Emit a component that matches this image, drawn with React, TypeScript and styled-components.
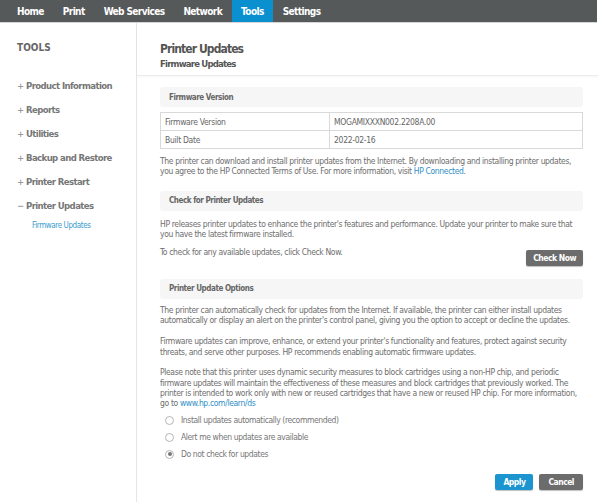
import React from 'react';
import styled, { createGlobalStyle } from 'styled-components';

const GlobalStyle = createGlobalStyle`
  html, body {
    margin: 0;
    padding: 0;
    background: #ffffff;
  }
  body {
    font-family: 'DejaVu Sans Condensed', 'Liberation Sans', sans-serif;
    color: #6b6b6b;
  }
`;

const tabs = ['Home', 'Print', 'Web Services', 'Network', 'Tools', 'Settings'];
const menu = ['Product Information', 'Reports', 'Utilities', 'Backup and Restore', 'Printer Restart'];

const Page = styled.div`
  width: 598px;
  height: 502px;
  overflow: hidden;
  display: flex;
  flex-direction: column;
`;

const NavBar = styled.nav`
  height: 22px;
  background: #555959;
  display: flex;
  align-items: stretch;
  padding-left: 7.5px;
  margin-right: 1px;
  border-bottom: 1px solid #d6d6d6;
`;

const Tab = styled.a<{ $active?: boolean }>`
  display: flex;
  align-items: center;
  padding: 0 9.5px;
  color: #ffffff;
  font-weight: bold;
  font-size: 10px;
  letter-spacing: -0.6px;
  background: ${(p) => (p.$active ? '#0a8fcf' : 'transparent')};
  text-decoration: none;
`;

const Body = styled.div`
  flex: 1;
  display: flex;
`;

const Sidebar = styled.aside`
  width: 137px;
  border-right: 1px solid #e6e6e6;
  padding: 19px 0 0 17px;
  box-sizing: border-box;
`;

const SideTitle = styled.div`
  font-weight: bold;
  font-size: 10px;
  color: #666;
  margin-bottom: 20px;
`;

const SideItem = styled.div`
  font-weight: bold;
  font-size: 9.5px;
  letter-spacing: -0.6px;
  color: #777;
  height: 24px;
  display: flex;
  align-items: center;
  gap: 2px;
`;

const Sign = styled.span`
  font-weight: normal;
  color: #888;
  width: 7px;
`;

const SubItem = styled.div`
  font-size: 8px;
  letter-spacing: -0.4px;
  color: #3a9ccf;
  padding-left: 15px;
  margin-top: 4px;
`;

const Main = styled.main`
  flex: 1;
  display: flex;
  flex-direction: column;
`;

const Header = styled.header`
  padding: 18px 0 5px 23px;
  border-bottom: 1px solid #ececec;
  box-shadow: 0 1px 2px rgba(0, 0, 0, 0.04);
`;

const Title = styled.h1`
  margin: 0;
  font-size: 12px;
  letter-spacing: -0.9px;
  color: #555;
  line-height: 16px;
`;

const Subtitle = styled.h2`
  margin: 0;
  font-size: 9.5px;
  letter-spacing: -0.8px;
  color: #555;
  line-height: 13px;
`;

const Content = styled.div`
  padding: 11px 15px 0 23px;
`;

const SectionHead = styled.div<{ $gap?: number }>`
  height: 20px;
  margin-top: ${(p) => p.$gap ?? 0}px;
  background: #f6f6f6;
  border-radius: 3px;
  display: flex;
  align-items: center;
  padding-left: 9px;
  font-weight: bold;
  font-size: 8px;
  letter-spacing: -0.45px;
  color: #666;
`;

const Table = styled.table`
  width: 100%;
  border-collapse: collapse;
  margin-top: 5px;
  font-size: 8.5px;
  letter-spacing: -0.3px;
  color: #666;

  td {
    border: 1px solid #d9d9d9;
    height: 17px;
    padding: 0 4px;
  }
  td:first-child {
    width: 160px;
  }
`;

const Para = styled.p<{ $gap?: number }>`
  margin: ${(p) => p.$gap ?? 7}px 0 0;
  font-size: 8.5px;
  letter-spacing: -0.36px;
  line-height: 10.4px;
  color: #6e6e6e;
`;

const Link = styled.a`
  color: #2f8fc6;
  text-decoration: none;
`;

const CheckRow = styled.div`
  display: flex;
  justify-content: space-between;
  align-items: flex-start;
  margin-top: 4px;
  margin-bottom: 13px;
`;

const Button = styled.button<{ $primary?: boolean; $pad?: number; $drop?: number }>`
  height: 16px;
  margin-top: ${(p) => p.$drop ?? 0}px;
  padding: 0 ${(p) => p.$pad ?? 7}px;
  border: none;
  border-radius: 2px;
  background: ${(p) => (p.$primary ? '#1b94d0' : '#6c6c6c')};
  color: #fff;
  font-family: inherit;
  font-weight: bold;
  font-size: 8.5px;
  letter-spacing: -0.5px;
  box-shadow: 0 1px 1px rgba(0, 0, 0, 0.25);
`;

const Radios = styled.div`
  margin-top: 3px;
  padding-left: 5px;
  display: flex;
  flex-direction: column;
`;

const RadioRow = styled.label`
  height: 17px;
  display: flex;
  align-items: center;
  gap: 7px;
  font-size: 8.5px;
  letter-spacing: -0.4px;
  color: #777;
`;

const RadioDot = styled.span<{ $on?: boolean }>`
  width: 7px;
  height: 7px;
  border: 1px solid #b5b5b5;
  border-radius: 50%;
  display: flex;
  align-items: center;
  justify-content: center;

  &::after {
    content: '';
    width: 4px;
    height: 4px;
    border-radius: 50%;
    background: ${(p) => (p.$on ? '#777' : 'transparent')};
  }
`;

const Actions = styled.div`
  display: flex;
  justify-content: flex-end;
  gap: 6px;
  margin-top: 11px;
`;

export default function App() {
  return (
    <Page>
      <GlobalStyle />
      <NavBar>
        {tabs.map((t) => (
          <Tab key={t} $active={t === 'Tools'}>
            {t}
          </Tab>
        ))}
      </NavBar>
      <Body>
        <Sidebar>
          <SideTitle>TOOLS</SideTitle>
          {menu.map((m) => (
            <SideItem key={m}>
              <Sign>+</Sign>
              {m}
            </SideItem>
          ))}
          <SideItem>
            <Sign>−</Sign>
            Printer Updates
          </SideItem>
          <SubItem>Firmware Updates</SubItem>
        </Sidebar>
        <Main>
          <Header>
            <Title>Printer Updates</Title>
            <Subtitle>Firmware Updates</Subtitle>
          </Header>
          <Content>
            <SectionHead>Firmware Version</SectionHead>
            <Table>
              <tbody>
                <tr>
                  <td>Firmware Version</td>
                  <td>MOGAMIXXXN002.2208A.00</td>
                </tr>
                <tr>
                  <td>Built Date</td>
                  <td>2022-02-16</td>
                </tr>
              </tbody>
            </Table>
            <Para $gap={7}>
              The printer can download and install printer updates from the Internet. By downloading and installing
              printer updates, you agree to the HP Connected Terms of Use. For more information, visit{' '}
              <Link>HP Connected</Link>.
            </Para>
            <SectionHead $gap={14}>Check for Printer Updates</SectionHead>
            <Para $gap={8}>
              HP releases printer updates to enhance the printer's features and performance. Update your printer to
              make sure that you have the latest firmware installed.
            </Para>
            <CheckRow>
              <Para $gap={3}>To check for any available updates, click Check Now.</Para>
              <Button $drop={6}>Check Now</Button>
            </CheckRow>
            <SectionHead>Printer Update Options</SectionHead>
            <Para $gap={6}>
              The printer can automatically check for updates from the Internet. If available, the printer can either
              install updates automatically or display an alert on the printer's control panel, giving you the option
              to accept or decline the updates.
            </Para>
            <Para $gap={11}>
              Firmware updates can improve, enhance, or extend your printer's functionality and features, protect
              against security threats, and serve other purposes. HP recommends enabling automatic firmware updates.
            </Para>
            <Para $gap={10}>
              Please note that this printer uses dynamic security measures to block cartridges using a non-HP chip,
              and periodic firmware updates will maintain the effectiveness of these measures and block cartridges that
              previously worked. The printer is intended to work only with new or reused cartridges that have a new or
              reused HP chip.  For more information, go to <Link>www.hp.com/learn/ds</Link>
            </Para>
            <Radios>
              <RadioRow>
                <RadioDot />
                Install updates automatically (recommended)
              </RadioRow>
              <RadioRow>
                <RadioDot />
                Alert me when updates are available
              </RadioRow>
              <RadioRow>
                <RadioDot $on />
                Do not check for updates
              </RadioRow>
            </Radios>
            <Actions>
              <Button $primary $pad={8}>
                Apply
              </Button>
              <Button $pad={9}>Cancel</Button>
            </Actions>
          </Content>
        </Main>
      </Body>
    </Page>
  );
}
